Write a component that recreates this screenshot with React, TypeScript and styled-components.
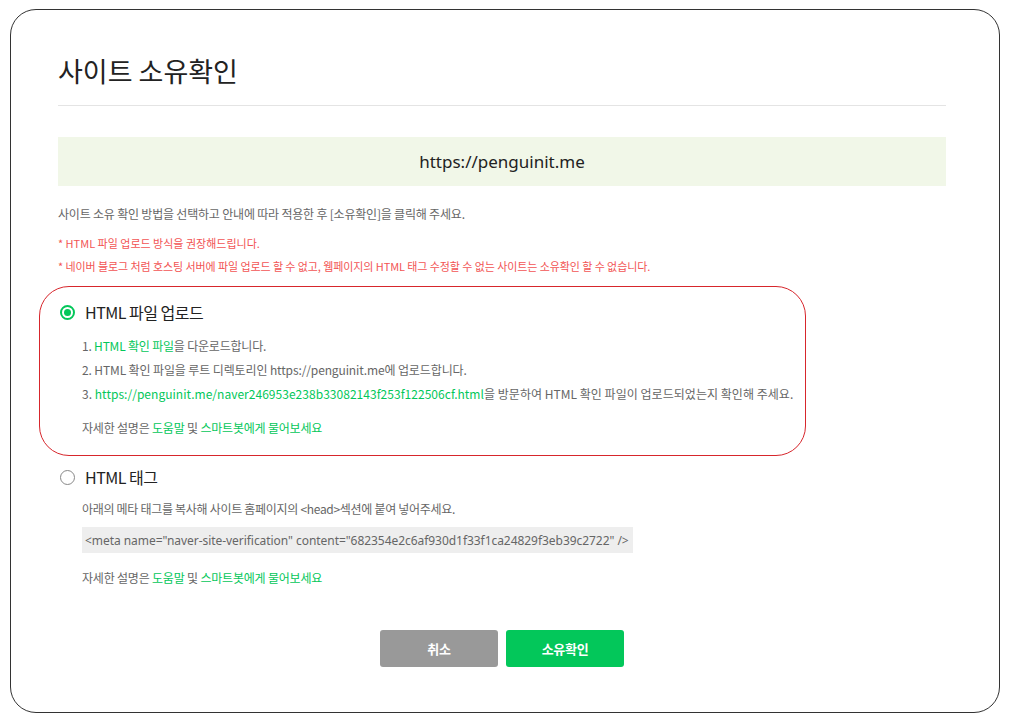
import React from "react";
import styled, { createGlobalStyle } from "styled-components";

const GlobalStyle = createGlobalStyle`
  html, body { margin: 0; padding: 0; background: #fff; }
  body { font-family: "Noto Sans", "Noto Sans CJK KR", sans-serif; color: #222; }
  * { box-sizing: border-box; }
`;

const Frame = styled.div`
  margin: 9px 0 0 10px;
  width: 990px;
  height: 704px;
  border: 1.5px solid #333;
  border-radius: 26px;
  background: #fff;
  padding: 46px 0 0 47px;
`;

const Content = styled.div`
  width: 888px;
  display: flex;
  flex-direction: column;
`;

const Title = styled.h1`
  margin: 0;
  font-size: 27px;
  line-height: 30px;
  font-weight: 400;
  color: #222;
  letter-spacing: 0;
  font-family: "Noto Sans CJK KR", sans-serif;
`;

const Divider = styled.hr`
  margin: 19px 0 0;
  border: 0;
  border-top: 1px solid #e4e4e4;
`;

const UrlBox = styled.div`
  margin-top: 31px;
  height: 49px;
  background: #f1f7e8;
  display: flex;
  align-items: center;
  justify-content: center;
  font-size: 17px;
  color: #222;
  font-family: "Noto Sans", sans-serif;
`;

const Desc = styled.p`
  margin: 19px 0 0;
  font-size: 12px;
  line-height: 18px;
  color: #666;
  letter-spacing: -0.2px;
  font-family: "Noto Sans CJK KR", sans-serif;
`;

const Notes = styled.ul`
  list-style: none;
  margin: 9px 0 0;
  padding: 0;
`;

const Note = styled.li<{ $spacing?: number }>`
  font-size: 11px;
  line-height: 23px;
  color: #f25454;
  letter-spacing: ${(p) => p.$spacing ?? 0}px;
  font-family: "Noto Sans CJK KR", sans-serif;
`;

const Option = styled.section<{ $highlighted?: boolean }>`
  margin: ${(p) => (p.$highlighted ? "8px" : "0")} 0 0 -19px;
  width: 767px;
  border: 1px solid ${(p) => (p.$highlighted ? "#d7262c" : "transparent")};
  border-radius: 30px;
  padding: ${(p) => (p.$highlighted ? "14px 20px 15px" : "9px 20px 0")};
  display: flex;
  flex-direction: column;
`;

const RadioRow = styled.label`
  display: flex;
  align-items: center;
  gap: 10px;
  height: 22px;
  font-size: 16px;
  color: #222;
  letter-spacing: -0.5px;
  font-family: "Noto Sans CJK KR", sans-serif;
`;

const Radio = styled.span<{ $checked?: boolean }>`
  width: 15px;
  height: 15px;
  flex: none;
  border-radius: 50%;
  border: ${(p) => (p.$checked ? "2px solid #03c75a" : "1.5px solid #888")};
  display: flex;
  align-items: center;
  justify-content: center;
  &::after {
    content: "";
    display: ${(p) => (p.$checked ? "block" : "none")};
    width: 7px;
    height: 7px;
    border-radius: 50%;
    background: #03c75a;
  }
`;

const Body = styled.div<{ $top?: number }>`
  margin-top: ${(p) => p.$top ?? 11}px;
  padding-left: 22px;
  display: flex;
  flex-direction: column;
`;

const Line = styled.p<{ $gap?: number; $spacing?: number }>`
  margin: ${(p) => p.$gap ?? 0}px 0 0;
  font-size: 12px;
  line-height: 24px;
  color: #666;
  letter-spacing: ${(p) => p.$spacing ?? -0.2}px;
  white-space: nowrap;
  font-family: "Noto Sans CJK KR", sans-serif;
`;

const Link = styled.a`
  color: #03c75a;
  text-decoration: none;
`;

const CodeBox = styled.div`
  margin-top: 6px;
  width: 551px;
  height: 26px;
  background: #eeeeee;
  display: flex;
  align-items: center;
  padding-left: 3px;
  font-size: 12px;
  color: #666;
  letter-spacing: -0.05px;
  white-space: nowrap;
  font-family: "Noto Sans", "Noto Sans CJK KR", sans-serif;
`;

const Buttons = styled.div`
  margin-top: 39px;
  display: flex;
  justify-content: center;
  gap: 8px;
`;

const Button = styled.button<{ $primary?: boolean }>`
  width: 118px;
  height: 37px;
  border: 0;
  border-radius: 3px;
  background: ${(p) => (p.$primary ? "#03c75a" : "#999999")};
  color: #fff;
  font-size: 13px;
  font-weight: 700;
  letter-spacing: -0.3px;
  font-family: "Noto Sans CJK KR", sans-serif;
  cursor: pointer;
`;

const Help = () => (
  <>
    자세한 설명은 <Link href="#">도움말</Link> 및{" "}
    <Link href="#">스마트봇에게 물어보세요</Link>
  </>
);

export default function App() {
  return (
    <>
      <GlobalStyle />
      <Frame>
        <Content>
          <Title>사이트 소유확인</Title>
          <Divider />
          <UrlBox>https://penguinit.me</UrlBox>
          <Desc>
            사이트 소유 확인 방법을 선택하고 안내에 따라 적용한 후 [소유확인]을 클릭해 주세요.
          </Desc>
          <Notes>
            <Note>* HTML 파일 업로드 방식을 권장해드립니다.</Note>
            <Note $spacing={-0.08}>
              * 네이버 블로그 처럼 호스팅 서버에 파일 업로드 할 수 없고, 웹페이지의 HTML 태그 수정할 수 없는 사이트는 소유확인 할 수 없습니다.
            </Note>
          </Notes>

          <Option $highlighted>
            <RadioRow>
              <Radio $checked />
              HTML 파일 업로드
            </RadioRow>
            <Body>
              <Line>
                1. <Link href="#">HTML 확인 파일</Link>을 다운로드합니다.
              </Line>
              <Line $spacing={-0.12}>
                2. HTML 확인 파일을 루트 디렉토리인 https://penguinit.me에 업로드합니다.
              </Line>
              <Line $spacing={0.03}>
                3.{" "}
                <Link href="#">https://penguinit.me/naver246953e238b33082143f253f122506cf.html</Link>
                을 방문하여 HTML 확인 파일이 업로드되었는지 확인해 주세요.
              </Line>
              <Line $gap={10}>
                <Help />
              </Line>
            </Body>
          </Option>

          <Option>
            <RadioRow>
              <Radio />
              HTML 태그
            </RadioRow>
            <Body $top={9}>
              <Line $spacing={-0.3}>
                아래의 메타 태그를 복사해 사이트 홈페이지의 &lt;head&gt;섹션에 붙여 넣어주세요.
              </Line>
              <CodeBox>
                &lt;meta name="naver-site-verification" content="682354e2c6af930d1f33f1ca24829f3eb39c2722" /&gt;
              </CodeBox>
              <Line $gap={13}>
                <Help />
              </Line>
            </Body>
          </Option>

          <Buttons>
            <Button>취소</Button>
            <Button $primary>소유확인</Button>
          </Buttons>
        </Content>
      </Frame>
    </>
  );
}
